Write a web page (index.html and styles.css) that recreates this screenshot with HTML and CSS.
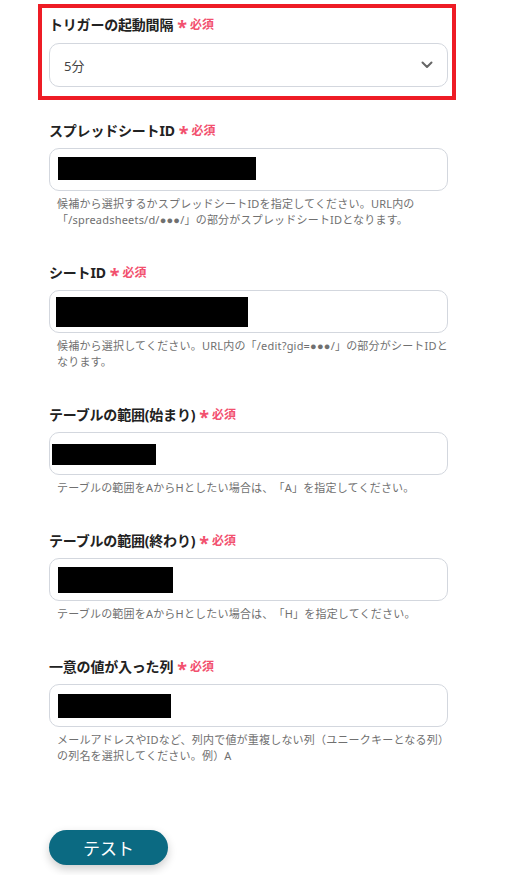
FILE: index.html
```html
<!DOCTYPE html>
<html>
<head>
  <title>トリガー設定</title>
  <link rel="stylesheet" href="styles.css">
</head>
<body>
  <div class="settings-form">
    <div class="highlight-box">
      <div class="form-group">
        <label class="field-label">トリガーの起動間隔<span class="required"><span class="star">*</span>必須</span></label>
        <div class="select-box">
          <span class="select-value">5分</span>
          <svg class="chevron" width="12" height="8" viewBox="0 0 12 8"><path d="M1.5 1.5 L6 6 L10.5 1.5" fill="none" stroke="#666" stroke-width="2" stroke-linecap="round" stroke-linejoin="round"/></svg>
        </div>
      </div>
    </div>

    <div class="form-group">
      <label class="field-label">スプレッドシートID<span class="required"><span class="star">*</span>必須</span></label>
      <div class="text-box"><div class="redacted redacted-sheet"></div></div>
      <p class="help-text">候補から選択するかスプレッドシートIDを指定してください。URL内の「/spreadsheets/d/<span class="dots">●●●</span>/」の部分がスプレッドシートIDとなります。</p>
    </div>

    <div class="form-group">
      <label class="field-label">シートID<span class="required"><span class="star">*</span>必須</span></label>
      <div class="text-box"><div class="redacted redacted-tab"></div></div>
      <p class="help-text">候補から選択してください。URL内の「/edit?gid=<span class="dots">●●●</span>/」の部分がシートIDとなります。</p>
    </div>

    <div class="form-group">
      <label class="field-label">テーブルの範囲(始まり)<span class="required"><span class="star">*</span>必須</span></label>
      <div class="text-box"><div class="redacted redacted-start"></div></div>
      <p class="help-text">テーブルの範囲をAからHとしたい場合は、「A」を指定してください。</p>
    </div>

    <div class="form-group">
      <label class="field-label">テーブルの範囲(終わり)<span class="required"><span class="star">*</span>必須</span></label>
      <div class="text-box"><div class="redacted redacted-end"></div></div>
      <p class="help-text">テーブルの範囲をAからHとしたい場合は、「H」を指定してください。</p>
    </div>

    <div class="form-group">
      <label class="field-label">一意の値が入った列<span class="required"><span class="star">*</span>必須</span></label>
      <div class="text-box"><div class="redacted redacted-key"></div></div>
      <p class="help-text">メールアドレスやIDなど、列内で値が重複しない列（ユニークキーとなる列）の列名を選択してください。例）A</p>
    </div>

    <button class="test-button" type="button">テスト</button>
  </div>
</body>
</html>
```

FILE: styles.css
```css
body {
  margin: 0;
  background-color: #fff;
  font-family: "Noto Sans", "Noto Sans CJK JP", sans-serif;
  color: #222;
  text-spacing-trim: space-all;
}

.settings-form {
  padding: 4px 0 40px 38px;
  width: 418px;
}

.highlight-box {
  border: 4px solid #ee1c25;
  padding: 6px 4px 9px 7px;
  margin-bottom: 20px;
}

.form-group {
  width: 399px;
  margin: 0 0 34px 11px;
}

.highlight-box .form-group {
  margin: 0;
}

.field-label {
  display: flex;
  align-items: center;
  height: 20px;
  font-size: 14px;
  font-weight: bold;
  color: #222;
  margin-bottom: 8px;
  letter-spacing: -0.2px;
}

.highlight-box .field-label {
  margin-bottom: 9px;
}

.required {
  display: inline-flex;
  align-items: center;
  margin-left: 4px;
  font-size: 12px;
  font-weight: bold;
  color: #f2506e;
  letter-spacing: 0;
}

.star {
  font-size: 18px;
  line-height: 1;
  margin-right: 3px;
  padding-top: 6px;
}

.select-box {
  box-sizing: border-box;
  height: 44px;
  border: 1px solid #d3d7de;
  border-radius: 10px;
  display: flex;
  align-items: center;
  justify-content: space-between;
  padding: 0 14px 0 14px;
}

.select-value {
  font-size: 13px;
  color: #444;
}

.chevron {
  display: block;
}

.text-box {
  box-sizing: border-box;
  height: 43px;
  border: 1px solid #d3d7de;
  border-radius: 10px;
}

.redacted {
  background-color: #000;
}

.redacted-sheet {
  width: 198px;
  height: 23px;
  margin: 8px 0 0 8px;
}

.redacted-tab {
  width: 192px;
  height: 30px;
  margin: 6px 0 0 6px;
}

.redacted-start {
  width: 104px;
  height: 21px;
  margin: 11px 0 0 2px;
}

.redacted-end {
  width: 115px;
  height: 26px;
  margin: 8px 0 0 8px;
}

.redacted-key {
  width: 113px;
  height: 24px;
  margin: 9px 0 0 8px;
}

.help-text {
  margin: 5px -8px 0 0;
  padding-left: 8px;
  font-size: 11px;
  line-height: 16px;
  color: #707070;
  letter-spacing: 0.2px;
}

.dots {
  font-family: "Liberation Sans", sans-serif;
}

.test-button {
  display: block;
  margin: 66px 0 0 11px;
  width: 119px;
  height: 35px;
  border: none;
  border-radius: 18px;
  background-color: #0b6a82;
  color: #fff;
  font-family: "Noto Sans CJK JP", sans-serif;
  font-size: 17px;
  box-shadow: 0 4px 10px rgba(0, 0, 0, 0.2);
  cursor: pointer;
}
```
